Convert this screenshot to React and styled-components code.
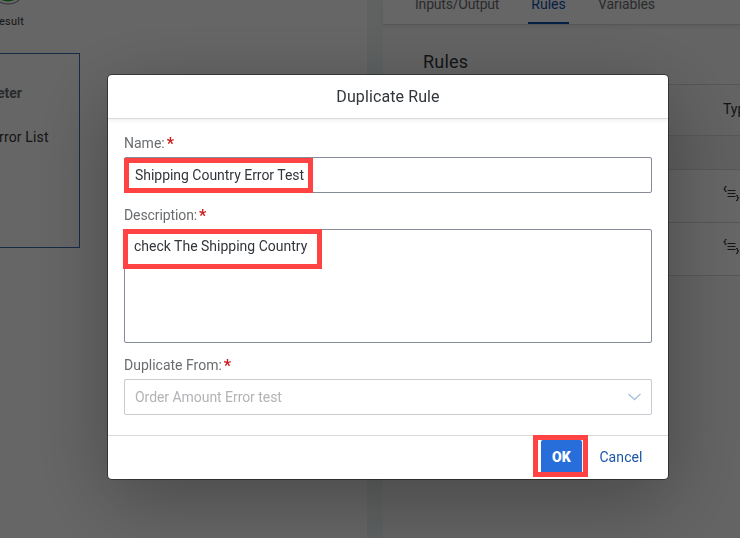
import React from "react";
import styled, { createGlobalStyle } from "styled-components";

const Global = createGlobalStyle`
  * { box-sizing: border-box; }
  html, body { margin: 0; height: 100%; overflow: hidden; }
  body { font-family: Roboto, "Liberation Sans", sans-serif; font-size: 14px; color: #32363a; background: #fff; }
`;

const Page = styled.div`
  display: flex;
  width: 740px;
  height: 538px;
  overflow: hidden;
`;
const Canvas = styled.section`
  width: 367px;
  background: #fff;
  overflow: hidden;
`;
const NodeIcon = styled.svg`
  display: block;
  width: 30px;
  height: 8px;
`;
const NodeLabel = styled.div`
  height: 45px;
  padding-top: 6px;
  font-size: 11px;
  line-height: 15px;
  letter-spacing: 0.25px;
  margin-left: -1px;
`;
const NodeCard = styled.div`
  width: 80px;
  height: 195px;
  border: 1px solid #3a6ab0;
  border-left: 0;
  padding-top: 29px;
  line-height: 20px;
  white-space: nowrap;
`;
const CardHeading = styled.div`
  margin-left: -3px;
  font-weight: 700;
  color: #6a6d70;
`;
const CardItem = styled.div`
  margin: 24px 0 0 -1px;
  letter-spacing: 0.15px;
`;
const Splitter = styled.div`
  width: 16px;
  background: #edf5f3;
`;
const Detail = styled.section`
  flex: 1;
  min-width: 0;
  background: #fafafa;
`;
const Tabs = styled.nav`
  display: flex;
  height: 25px;
  padding-left: 32px;
  background: #fff;
  border-bottom: 1px solid #d9d9d9;
  box-shadow: 0 2px 4px rgba(0, 0, 0, 0.08);
`;
const Tab = styled.span`
  width: ${(p) => p.$w}px;
  height: 29px;
  margin: -5px 29px 0 0;
  line-height: 19px;
  white-space: nowrap;
  letter-spacing: ${(p) => p.$ls || "0"};
  text-align: ${(p) => (p.$active ? "center" : "left")};
  color: ${(p) => (p.$active ? "#0a4ea8" : "#6a6d70")};
  border-bottom: ${(p) => (p.$active ? "2px solid #0a4ea8" : "0")};
`;
const Title = styled.h2`
  margin: 0;
  height: 59px;
  padding: 25px 0 0 40px;
  font-size: 18px;
  line-height: 24px;
  font-weight: 400;
  letter-spacing: 0.2px;
`;
const Row = styled.div`
  display: flex;
  align-items: center;
  justify-content: flex-end;
  height: ${(p) => p.$h}px;
  border-top: 1px solid #d9d9d9;
  background: ${(p) => p.$bg || "#fff"};
  overflow: hidden;
`;
const TypeCell = styled.span`
  width: 17px;
  white-space: nowrap;
  padding-bottom: 3px;
`;
const RuleIcon = styled.svg`
  width: 18px;
  height: 18px;
  margin-bottom: 4px;
`;

const Overlay = styled.div`
  position: fixed;
  inset: 0;
  display: flex;
  align-items: flex-start;
  padding: 75px 0 0 108px;
  background: rgba(0, 0, 0, 0.6);
`;
const Dialog = styled.div`
  display: flex;
  flex-direction: column;
  width: 560px;
  height: 404px;
  border-radius: 4px;
  background: #fff;
  box-shadow: 0 0 0 1px rgba(0, 0, 0, 0.42), 0 20px 80px rgba(0, 0, 0, 0.3);
`;
const DialogHeader = styled.header`
  height: 44px;
  line-height: 43px;
  text-align: center;
  font-size: 16px;
  letter-spacing: 0.1px;
  border-bottom: 1px solid #d9d9d9;
  box-shadow: 0 2px 4px rgba(0, 0, 0, 0.06);
`;
const DialogBody = styled.div`
  flex: 1;
  padding: 14px 16px 0;
`;
const Label = styled.label`
  display: flex;
  height: 24px;
  line-height: 21px;
  color: #6a6d70;
  letter-spacing: ${(p) => p.$ls || "0"};
`;
const Star = styled.span`
  margin-left: 2px;
  color: #cc1919;
  font-size: 16px;
  font-weight: 700;
  line-height: 22px;
`;
const Field = styled.div`
  display: flex;
  align-items: ${(p) => (p.$area ? "flex-start" : "center")};
  justify-content: space-between;
  height: ${(p) => (p.$area ? 114 : 36)}px;
  margin-bottom: 12px;
  padding: ${(p) => (p.$area ? "6px 9px" : "0 10px")};
  border: 1px solid ${(p) => (p.$disabled ? "#c9cbd0" : "#858b99")};
  border-radius: 2px;
  line-height: 20px;
  color: ${(p) => (p.$disabled ? "#b1b3b5" : "#32363a")};
`;
const Value = styled.span`
  letter-spacing: ${(p) => p.$ls || "0"};
`;
const Anchor = styled.div`
  position: relative;
`;
const Highlight = styled.div`
  position: absolute;
  left: ${(p) => p.$x}px;
  top: ${(p) => p.$y}px;
  width: ${(p) => p.$w}px;
  height: ${(p) => p.$h}px;
  border: 5px solid #ff4343;
  pointer-events: none;
`;
const DialogFooter = styled.footer`
  display: flex;
  align-items: flex-start;
  justify-content: flex-end;
  gap: 8px;
  height: 44px;
  padding: 4px 16px 0 0;
  border-top: 1px solid #d9d9d9;
`;
const Button = styled.button`
  display: block;
  height: 34px;
  width: ${(p) => (p.$primary ? 41 : 62)}px;
  padding: 0;
  border: 0;
  border-radius: 2px;
  font: ${(p) => (p.$primary ? 900 : 400)} 14px Roboto, sans-serif;
  letter-spacing: ${(p) => (p.$primary ? "0.3px" : "0.1px")};
  color: ${(p) => (p.$primary ? "#fff" : "#1a56a6")};
  background: ${(p) => (p.$primary ? "#286eda" : "transparent")};
`;

const ScriptIcon = () => (
  <RuleIcon viewBox="0 0 18 18" fill="none" stroke="#32363a">
    <path d="M4.6 1.5Q3 1.3 3 2.7T1.6 4Q3 4 3 5.3T4.6 6.5" strokeWidth="1.1" />
    <path d="M5.5 5.5h8M5.5 8.5h8M5.5 11.5h8" />
    <path d="M14 10.5Q15.6 10.3 15.6 11.7T17 13Q15.6 13 15.6 14.3T14 15.5" strokeWidth="1.1" />
  </RuleIcon>
);

export default function App() {
  return (
    <>
      <Global />
      <Page>
        <Canvas>
          <NodeIcon viewBox="0 0 30 8">
            <circle cx="8" cy="-14" r="18" fill="#fff" stroke="#707b80" />
            <circle cx="8" cy="-13" r="14.5" fill="#18a528" />
          </NodeIcon>
          <NodeLabel>esult</NodeLabel>
          <NodeCard>
            <CardHeading>eter</CardHeading>
            <CardItem>rror List</CardItem>
          </NodeCard>
        </Canvas>
        <Splitter />
        <Detail>
          <Tabs>
            <Tab $w={84} $ls="-0.2px">Inputs/Output</Tab>
            <Tab $w={41} $active>Rules</Tab>
            <Tab $w={60} $ls="-0.1px">Variables</Tab>
          </Tabs>
          <Title>Rules</Title>
          <Row $h={51} $bg="#f7f7f7"><TypeCell>Type</TypeCell></Row>
          <Row $h={34} $bg="#efefef" />
          <Row $h={53}><ScriptIcon /></Row>
          <Row $h={53}><ScriptIcon /></Row>
          <Row $h={263} $bg="#fafafa" />
        </Detail>
      </Page>
      <Overlay>
        <Dialog>
          <DialogHeader>Duplicate Rule</DialogHeader>
          <DialogBody>
            <Label>Name:<Star>*</Star></Label>
            <Anchor>
              <Field><Value $ls="-0.03px">Shipping Country Error Test</Value></Field>
              <Highlight $x={0} $y={1} $w={189} $h={35} />
            </Anchor>
            <Label $ls="-0.1px">Description:<Star>*</Star></Label>
            <Anchor>
              <Field $area><Value>check The Shipping Country</Value></Field>
              <Highlight $x={-1} $y={0} $w={199} $h={40} />
            </Anchor>
            <Label>Duplicate From:<Star>*</Star></Label>
            <Field $disabled>
              <Value $ls="-0.05px">Order Amount Error test</Value>
              <svg width="14" height="8" viewBox="0 0 14 8" fill="none" stroke="#a9c0dc" strokeWidth="1.3">
                <path d="M1.5 1l6 5.5L13.5 1" />
              </svg>
            </Field>
          </DialogBody>
          <DialogFooter>
            <Anchor>
              <Button $primary>OK</Button>
              <Highlight $x={-8} $y={-5} $w={55} $h={42} />
            </Anchor>
            <Button>Cancel</Button>
          </DialogFooter>
        </Dialog>
      </Overlay>
    </>
  );
}
